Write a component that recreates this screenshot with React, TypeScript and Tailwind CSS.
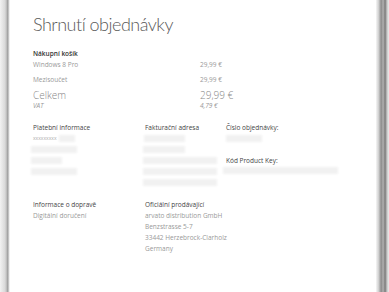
import React from "react";

const Blur = ({ w, ml = 0, h = 7 }: { w: number; ml?: number; h?: number }) => (
  <div className="flex" style={{ marginLeft: ml }}>
    <div className="bg-[#f1f1f1] blur-[0.8px]" style={{ width: w, height: h }} />
  </div>
);

export default function App() {
  return (
    <div
      className="flex h-[292px] w-[389px] overflow-hidden bg-white text-[#8a8a8a]"
      style={{ fontFamily: '"Open Sans", "Noto Sans", sans-serif' }}
    >
      <div className="h-full w-[10px] bg-[linear-gradient(to_right,#f2f2f2,#d9d9d9_50%,#b5b5b5_70%,#9a9a9a_78%,#e0e0e0_90%,#ffffff)]" />
      <div className="flex flex-1 flex-col pl-[23px] pt-[11px]">
        <h1
          className="text-[18px] font-light leading-[26px] tracking-[-0.5px] text-[#5a5a5a]"
          style={{ fontFamily: 'Lato, "Open Sans", sans-serif' }}
        >
          Shrnutí objednávky
        </h1>
        <div className="mt-[12px] text-[6.5px] font-semibold leading-[9px] text-[#333]">Nákupní košík</div>
        <div className="mt-[2px] flex text-[6.5px] leading-[9px] text-[#999]">
          <span className="w-[167px]">Windows 8 Pro</span>
          <span>29,99 €</span>
        </div>
        <div className="mt-[6px] flex text-[6.5px] leading-[9px] text-[#999]">
          <span className="w-[167px]">Mezisoučet</span>
          <span>29,99 €</span>
        </div>
        <div className="mt-[5px] flex text-[10px] font-light leading-[12px] text-[#888]">
          <span className="w-[167px]">Celkem</span>
          <span>29,99 €</span>
        </div>
        <div className="flex text-[6.5px] italic leading-[9px] text-[#999]">
          <span className="w-[167px]">VAT</span>
          <span>4,79 €</span>
        </div>

        <div className="mt-[13px] flex">
          <div className="flex w-[112px] flex-col">
            <div className="text-[6.5px] leading-[9px] text-[#444]">Platební informace</div>
            <div className="mt-[2px] flex items-center">
              <span className="text-[5px] leading-[9px] text-[#aaa]">xxxxxxxxx</span>
              <div className="ml-[2px] h-[7px] w-[16px] bg-[#f1f1f1] blur-[0.8px]" />
            </div>
            <div className="mt-[3px] flex flex-col gap-[4px]">
              <Blur w={46} ml={-2} />
              <Blur w={31} ml={-2} />
              <Blur w={46} ml={-2} />
            </div>
          </div>
          <div className="flex w-[81px] flex-col">
            <div className="text-[6.5px] leading-[9px] text-[#444]">Fakturační adresa</div>
            <div className="mt-[3px] flex flex-col gap-[4px]">
              <Blur w={41} ml={-1} />
              <Blur w={42} ml={-2} />
              <Blur w={74} ml={-2} />
              <Blur w={74} ml={-2} />
              <Blur w={74} ml={-2} />
            </div>
          </div>
          <div className="flex flex-col">
            <div className="text-[6.5px] leading-[9px] text-[#444]">Číslo objednávky:</div>
            <div className="mt-[3px]">
              <Blur w={36} />
            </div>
            <div className="mt-[14px] text-[6.5px] leading-[9px] text-[#444]">Kód Product Key:</div>
            <div className="mt-[2px]">
              <Blur w={115} ml={-3} />
            </div>
          </div>
        </div>

        <div className="mt-[13px] flex text-[6.5px] leading-[11px]">
          <div className="flex w-[112px] flex-col">
            <div className="text-[#444]">Informace o dopravě</div>
            <div className="text-[#999]">Digitální doručení</div>
          </div>
          <div className="flex flex-col text-[#999]">
            <div className="text-[#444]">Oficiální prodávající</div>
            <div>arvato distribution GmbH</div>
            <div>Benzstrasse 5-7</div>
            <div>33442 Herzebrock-Clarholz</div>
            <div>Germany</div>
          </div>
        </div>
      </div>
      <div className="h-full w-[13px] bg-[linear-gradient(to_right,#f6f6f6,#d0d0d0_20%,#8c8c8c_40%,#b0b0b0_55%,#7a7a7a_70%,#c8c8c8_85%,#eeeeee)]" />
    </div>
  );
}
